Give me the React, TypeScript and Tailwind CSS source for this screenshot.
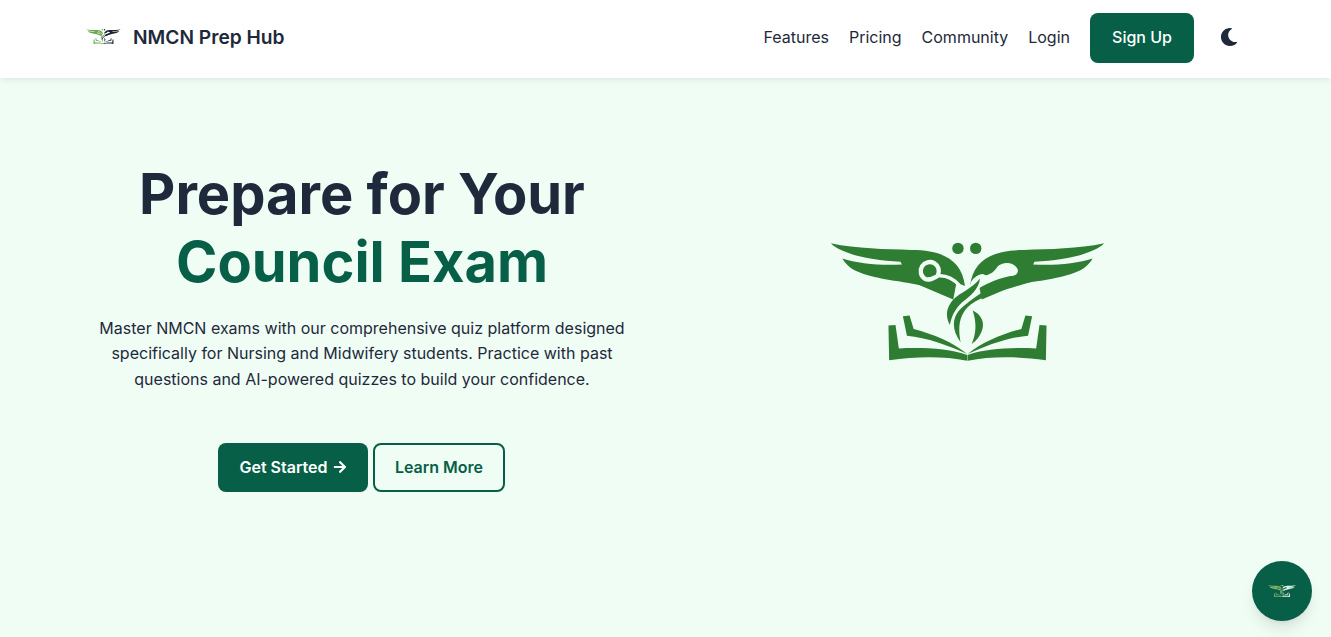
import { FaArrowRight, FaMoon } from "react-icons/fa";

function Logo({ left, right, hole, className }: { left: string; right: string; hole: string; className: string }) {
  const wing =
    "M880 55C800 72 720 72 640 75C545 75 490 105 480 182C490 178 497 175 505 170L515 222L615 180C650 172 680 168 700 165C770 152 825 140 845 100C800 115 730 122 668 118L672 110C770 105 850 85 880 55Z";
  const outerBook = "M708 300L687 298L677 368C605 365 525 368 473 388L473 405C545 390 625 392 706 403Z";
  const innerBook = "M665 272L645 270L633 310C575 325 515 350 473 385C525 360 595 335 653 330Z";
  return (
    <svg viewBox="60 45 825 365" className={className}>
      <g fill={left}>
        <g transform="translate(945 0) scale(-1 1)">
          <path d={wing} />
          <path d={outerBook} />
          <path d={innerBook} />
        </g>
        <circle cx="444" cy="70" r="17" />
      </g>
      <g fill={right}>
        <path d={wing} />
        <path d={outerBook} />
        <path d={innerBook} />
        <circle cx="497" cy="70" r="17" />
      </g>
      <g fill="none" stroke={hole}>
        <path d="M384 150A27 27 0 1 0 345 160C358 168 372 158 384 152" strokeWidth="13" />
        <path d="M384 152C405 150 428 158 448 180" strokeWidth="10" />
      </g>
      <path
        d="M482 172C490 155 505 148 518 146L527 150C540 148 552 140 562 124C578 108 612 110 622 132C625 145 615 152 600 152C560 160 510 180 470 215Z"
        fill={hole}
      />
      <path
        fill={left}
        d="M420 298C405 270 410 245 430 222C455 200 485 190 510 160C505 195 480 212 455 232C435 252 425 272 420 298Z"
      />
      <g fill={right}>
        <path d="M660 170C600 190 530 205 482 237C450 262 442 300 452 350C428 315 425 285 445 258C480 220 550 175 620 150Z" />
        <path d="M488 255C510 265 522 285 518 305C515 325 500 345 485 355C495 330 503 300 488 255Z" />
      </g>
    </svg>
  );
}

export default function App() {
  return (
    <div className="min-h-screen overflow-hidden bg-[#f0fdf5] font-['Inter',sans-serif] text-[#1e293b]">
      <header className="relative flex h-[78px] items-center justify-between bg-white pb-[4px] pl-[86px] pr-[87px] shadow-md shadow-black/5">
        <a className="flex items-center gap-3">
          <Logo left="#6aa84f" right="#1c2530" hole="#ffffff" className="h-[19px] w-[35px]" />
          <span className="text-[19.2px] font-semibold">NMCN Prep Hub</span>
        </a>
        <nav className="flex items-center gap-5 text-base">
          <a>Features</a>
          <a>Pricing</a>
          <a>Community</a>
          <a>Login</a>
          <a className="-mb-[2px] flex h-[50px] w-[104px] items-center justify-center rounded-lg bg-[#065f46] pb-[2px] font-medium text-white">
            Sign Up
          </a>
          <button className="flex h-[42px] w-[30px] items-center justify-center">
            <FaMoon className="h-[18px] w-[18px]" />
          </button>
        </nav>
      </header>

      <main className="ml-[59px] grid w-[1212px] grid-cols-2 pt-[82px]">
        <section className="flex flex-col items-center text-center">
          <h1 className="text-[56px]/[68px] font-bold">
            Prepare for Your
            <span className="block text-[#065f46]">Council Exam</span>
          </h1>
          <p className="mt-[19.6px] w-[540px] text-base/[25.6px]">
            Master NMCN exams with our comprehensive quiz platform designed specifically for Nursing and Midwifery
            students. Practice with past questions and AI-powered quizzes to build your confidence.
          </p>
          <div className="-ml-[1px] mt-[50.4px] flex gap-[5px]">
            <a className="flex h-[49px] w-[150px] items-center justify-center gap-[5px] rounded-lg bg-[#065f46] font-semibold text-white">
              Get Started
              <FaArrowRight className="h-[14px] w-[14px]" />
            </a>
            <a className="flex h-[49px] w-[132px] items-center justify-center rounded-lg border-2 border-[#065f46] font-semibold text-[#065f46]">
              Learn More
            </a>
          </div>
        </section>
        <section className="flex justify-center pr-[1px] pt-[80px]">
          <Logo left="#2e7d32" right="#2e7d32" hole="#f0fdf5" className="h-[122.5px] w-[277px]" />
        </section>
      </main>

      <button className="absolute bottom-[16px] right-[19px] flex h-[60px] w-[60px] items-center justify-center rounded-full bg-[#065f46] shadow-lg">
        <Logo left="#7fb069" right="#e6f4ea" hole="#065f46" className="h-[14px] w-[28px]" />
      </button>
    </div>
  );
}
